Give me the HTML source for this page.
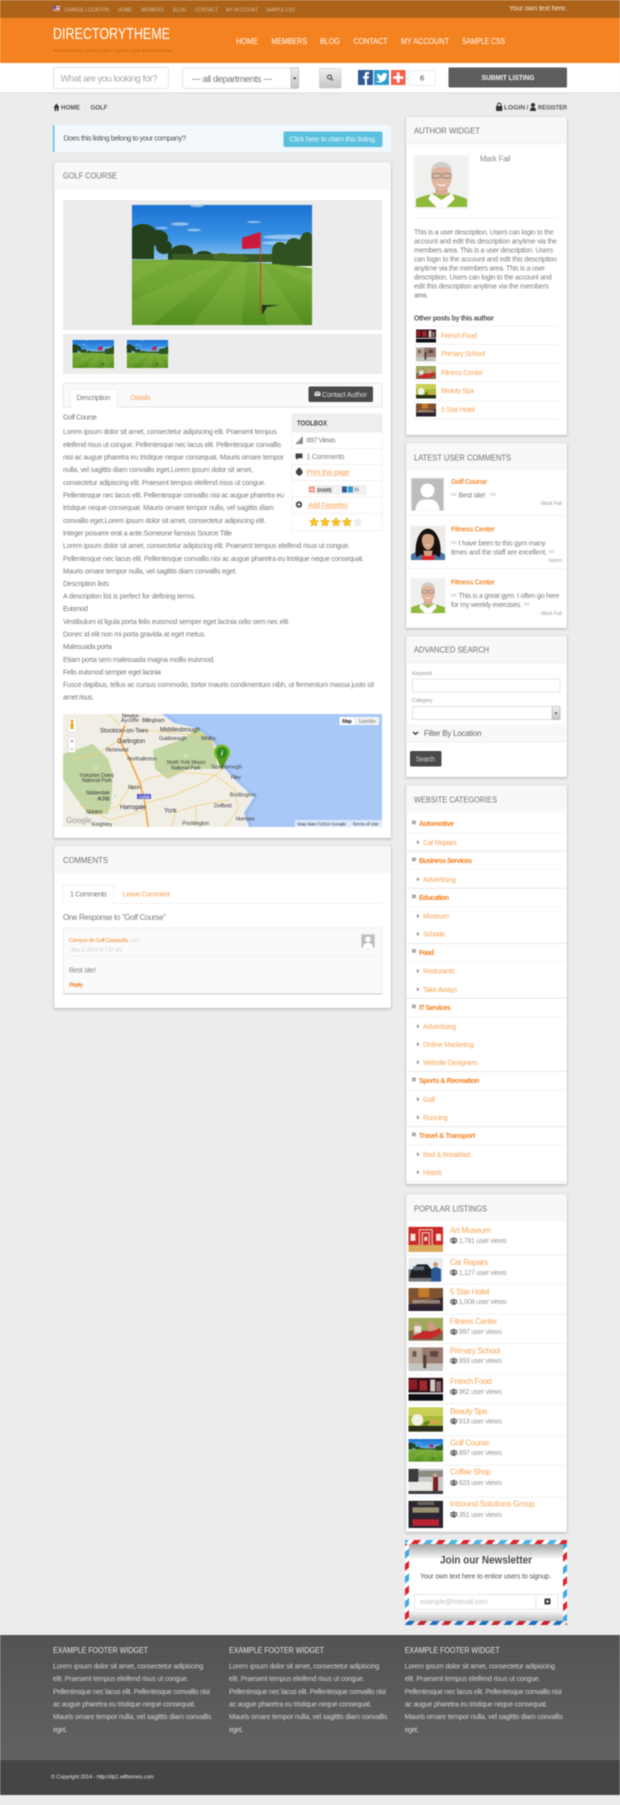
<!DOCTYPE html>
<html lang="en"><head><meta charset="utf-8"><title>Golf Course - Directory Theme</title>
<style>
html,body{margin:0;padding:0;background:#ececec;width:620px;height:1805px;overflow:hidden}
svg{display:block;filter:blur(.42px);font-family:"Liberation Sans",sans-serif}
text{white-space:pre}
.card{fill:#fff;stroke:#ddd;stroke-width:.6;filter:drop-shadow(0 1px 1px rgba(0,0,0,.22))}
.head{fill:#f8f8f8}
.ht{font-size:8.6px;fill:#707070}
.b{font-size:7.1px;fill:#7a7a7a}
.s{font-size:7.1px;fill:#7e7e7e}
.o{font-size:7.1px;fill:#f9a557}
.ob{font-size:7px;fill:#f58220;font-weight:bold}
.v{font-size:7px;fill:#999}
.f{font-size:7.1px;fill:#d2d2d2}
.ft{font-size:8.6px;fill:#e6e6e6}
.top{font-size:5.2px;fill:#dcbf9f}
.nav{font-size:8px;fill:#fff}
.m{font-size:5.5px;fill:#444}
.l{stroke:#eee;stroke-width:.8}
</style></head><body>
<svg xmlns="http://www.w3.org/2000/svg" width="620" height="1805" viewBox="0 0 620 1805">
<defs>
<linearGradient id="sky" x1="0" y1="0" x2="0" y2="1"><stop offset="0" stop-color="#1c72d2"/><stop offset=".55" stop-color="#3a93e6"/><stop offset="1" stop-color="#a4d0f0"/></linearGradient>
<linearGradient id="grass" x1="0" y1="0" x2="0" y2="1"><stop offset="0" stop-color="#79ad3a"/><stop offset=".45" stop-color="#6ea430"/><stop offset="1" stop-color="#518d1e"/></linearGradient>
<linearGradient id="foot" x1="0" y1="0" x2="0" y2="1"><stop offset="0" stop-color="#535353"/><stop offset="1" stop-color="#626262"/></linearGradient>
<linearGradient id="btn" x1="0" y1="0" x2="0" y2="1"><stop offset="0" stop-color="#f0f0f0"/><stop offset="1" stop-color="#c4c4c4"/></linearGradient>
<linearGradient id="nl" x1="0" y1="0" x2="0" y2="1"><stop offset="0" stop-color="#a4a4a4"/><stop offset=".2" stop-color="#fff"/><stop offset=".86" stop-color="#fff"/><stop offset="1" stop-color="#bcbcbc"/></linearGradient>
<pattern id="air" width="24.7" height="4" patternUnits="userSpaceOnUse" patternTransform="skewX(-40)"><rect width="24.7" height="4" fill="#fff"/><rect x="2" width="7" height="4" fill="#e0222f"/><rect x="14.5" width="7" height="4" fill="#4db4e8"/></pattern>
<pattern id="airb" width="24.7" height="4" patternUnits="userSpaceOnUse" patternTransform="skewX(-40)"><rect width="24.7" height="4" fill="#e8e8e8"/><rect x="2" width="7" height="4" fill="#c52430"/><rect x="14.5" width="7" height="4" fill="#1c6dbf"/></pattern>
<pattern id="airv" width="4" height="24.7" patternUnits="userSpaceOnUse" patternTransform="skewY(-40)"><rect width="4" height="24.7" fill="#fff"/><rect y="2" width="4" height="7" fill="#e0222f"/><rect y="14.5" width="4" height="7" fill="#3fa8e4"/></pattern>

<symbol id="golf" viewBox="0 0 180 120" preserveAspectRatio="none">
<rect width="180" height="60" fill="url(#sky)"/>
<g fill="#c4def3" opacity=".65"><ellipse cx="65" cy="1" rx="7" ry="1.2"/><ellipse cx="48" cy="19" rx="9" ry="1.8"/><ellipse cx="62" cy="25" rx="7" ry="1.4"/><ellipse cx="30" cy="23" rx="6" ry="1.1"/><ellipse cx="122" cy="17" rx="7" ry="1"/><ellipse cx="155" cy="32" rx="24" ry="2.5"/><ellipse cx="150" cy="38" rx="20" ry="2"/></g>
<g fill="#24401c"><ellipse cx="11" cy="28" rx="13" ry="9"/><ellipse cx="26" cy="33" rx="10" ry="8"/><ellipse cx="32" cy="42" rx="8" ry="7"/><rect y="28" width="22" height="26"/><ellipse cx="50" cy="47" rx="11" ry="7"/><rect x="36" y="44" width="22" height="11"/><ellipse cx="72" cy="50" rx="8" ry="4"/></g>
<rect x="40" y="49" width="100" height="8" fill="#3a5c24"/>
<g fill="#4a6a26"><ellipse cx="90" cy="52" rx="9" ry="4"/><ellipse cx="105" cy="53" rx="12" ry="3"/></g>
<g fill="#2f5220"><ellipse cx="148" cy="46" rx="8" ry="9"/><ellipse cx="162" cy="44" rx="9" ry="11"/><ellipse cx="175" cy="41" rx="8" ry="14"/><rect x="140" y="48" width="40" height="13"/></g>
<path d="M0 55c40-1 120 0 180 8v57H0z" fill="url(#grass)"/>
<path d="M0 60 42 56 0 78zM0 95 90 57h8L20 120H0zM60 120 107 58h8L110 120zM135 120 123 60h9L172 120zM180 80 140 62h10L180 70z" fill="#9cc552" opacity=".22"/>
<path d="M130 100h18l-13 2-5 8z" fill="#20341a"/>
<rect x="128" y="27" width=".9" height="83" fill="#c43a2c"/>
<path d="M110 33 128 27v16l-18 1z" fill="#cc1a3c"/>
</symbol>

<symbol id="man" viewBox="0 0 50 50" preserveAspectRatio="none">
<rect width="50" height="50" fill="#f0f0ee"/>
<path d="M0 50V42c6-3 13-4 17-6h16c4 2 11 3 17 6v8z" fill="#8fb93a"/>
<path d="M15 36 25 43 35 36l3 6-8 8h-10l-8-8z" fill="#fff"/>
<rect x="19" y="28" width="12" height="10" fill="#d9ab95"/>
<ellipse cx="25" cy="20" rx="10" ry="14" fill="#e2b49e"/>
<path d="M15 17C14 8 20 5 25 5s11 3 10 12c-1-5-4-7-10-7s-9 2-10 7z" fill="#cfcdcb"/>
<rect x="16" y="16.500" width="8" height="4.500" rx="1.500" fill="none" stroke="#8a8f85" stroke-width="1"/><rect x="26" y="16.500" width="8" height="4.500" rx="1.500" fill="none" stroke="#8a8f85" stroke-width="1"/>
<path d="M20 26c3 2.500 7 2.500 10 0-2 4-8 4-10 0z" fill="#fff"/>
</symbol>
<symbol id="woman" viewBox="0 0 50 50" preserveAspectRatio="none">
<rect width="50" height="50" fill="#ecebe8"/>
<path d="M0 50v-8l10-6h30l10 6v8z" fill="#4a74a6"/>
<path d="M16 50V38h18v12z" fill="#d8262c"/>
<path d="M8 46C4 30 10 4 25 3c15 1 22 28 17 43l-6-4-22 0z" fill="#17100e"/>
<path d="M16 20c0-8 5-9 9-9s10 2 9 10c0 8-5 14-9 14s-9-6-9-15z" fill="#d3a084"/><path d="M18 36h14l-2 8h-10z" fill="#d3a084"/>
<path d="M20 26c3 3 7 3 10 0-2 4-8 4-10 0z" fill="#fff"/>
</symbol>
<symbol id="ava" viewBox="0 0 32 32" preserveAspectRatio="none">
<rect width="32" height="32" fill="#bdbdbd"/>
<circle cx="16" cy="12" r="7" fill="#fff"/><path d="M4 32c0-6 3-10 8-11h8c5 1 8 5 8 11z" fill="#fff"/>
</symbol>
<symbol id="users" viewBox="0 0 8 7">
<circle cx="4" cy="1.800" r="1.500"/><circle cx="1.400" cy="2.300" r="1.100"/><circle cx="6.600" cy="2.300" r="1.100"/>
<path d="M1.800 7V5c0-1 .8-1.700 2.200-1.700S6.200 4 6.200 5v2zM0 5.500V4.500c0-.6.500-1 1.500-1l.5.300C1.300 4.300 1.200 4.800 1.200 5.500zM8 5.500V4.500c0-.6-.5-1-1.500-1l-.5.300c.7.500.8 1 .8 1.700z"/>
</symbol>

<symbol id="tMuseum" viewBox="0 0 35 25" preserveAspectRatio="none"><rect width="35" height="25" fill="#c92a27"/><rect y="18" width="35" height="7" fill="#d9a95c"/><rect x="2" y="7" width="5" height="7" fill="#f6e9df"/><rect x="28" y="7" width="5" height="7" fill="#f6e9df"/><path d="M11 18V3h13v15M14 18V6h7v12" fill="none" stroke="#f2dcd3" stroke-width="1"/><rect x="16" y="10" width="3" height="4" fill="#f2dcd3"/></symbol>
<symbol id="tCar" viewBox="0 0 35 25" preserveAspectRatio="none"><rect width="35" height="25" fill="#e9ecef"/><rect y="12" width="24" height="13" fill="#777"/><path d="M1 21 3 13 9 7h10l5 6v8z" fill="#1e2024"/><rect x="5" y="9" width="11" height="4" fill="#5a6a78"/><path d="M23 25V12l3-2h3l4 2v13z" fill="#2a5a96"/><circle cx="27.5" cy="7" r="2.5" fill="#c99b80"/></symbol>
<symbol id="tHotel" viewBox="0 0 35 25" preserveAspectRatio="none"><rect width="35" height="25" fill="#3a2a28"/><path d="M0 0h35v10L0 18z" fill="#7d5334"/><rect x="10" y="0" width="11" height="10" fill="#c47a2a"/><rect x="4" y="13" width="28" height="4" fill="#b9a79a" opacity=".7"/><rect y="19" width="35" height="6" fill="#2a2230"/></symbol>
<symbol id="tFit" viewBox="0 0 35 25" preserveAspectRatio="none"><rect width="35" height="25" fill="#a2a85e"/><rect y="14" width="35" height="11" fill="#7d6a4a"/><path d="M6 6c3-2 5 0 5 3l2 9-8 1z" fill="#cf9c80"/><path d="M20 5c3-2 5 0 5 2l5 6-10 2z" fill="#cf9c80"/><path d="M3 21 15 15l9 0 8-4 1 6-10 6H5z" fill="#c8282a"/><rect x="6" y="9" width="7" height="7" fill="#e6e6df"/></symbol>
<symbol id="tSchool" viewBox="0 0 35 25" preserveAspectRatio="none"><rect width="35" height="25" fill="#9b7a6e"/><rect y="0" width="14" height="17" fill="#b7a79a"/><rect y="17" width="35" height="8" fill="#c6c4c0"/><rect x="22" y="4" width="8" height="6" fill="#5e4a44"/><rect x="4" y="4" width="4" height="6" fill="#6b5a50"/><rect x="15" y="8" width="3" height="14" fill="#4a4038"/></symbol>
<symbol id="tFood" viewBox="0 0 35 25" preserveAspectRatio="none"><rect width="35" height="25" fill="#2a1016"/><rect y="2" width="9" height="11" fill="#8a1c26"/><rect x="11" y="3" width="8" height="11" fill="#a02a30"/><rect x="22" y="2" width="5" height="13" fill="#d4c9c6"/><rect x="28" y="4" width="5" height="11" fill="#8b6a6e"/><rect y="16" width="35" height="2" fill="#e3dfe0"/><rect y="18" width="35" height="7" fill="#0d0d14"/></symbol>
<symbol id="tSpa" viewBox="0 0 35 25" preserveAspectRatio="none"><rect width="35" height="25" fill="#a4bc3a"/><rect y="0" width="35" height="9" fill="#c9cf54"/><ellipse cx="9" cy="13" rx="6" ry="6" fill="#f2f1e6"/><ellipse cx="26" cy="15" rx="7" ry="3" fill="#cfa94a"/><rect y="19" width="35" height="6" fill="#2c3016"/><path d="M14 18c2-4 6-5 8-3l-3 4z" fill="#5f8a22"/></symbol>
<symbol id="tCoffee" viewBox="0 0 35 25" preserveAspectRatio="none"><rect width="35" height="25" fill="#c7c7c4"/><rect x="0" y="0" width="10" height="13" fill="#3a3a3f"/><rect y="13" width="24" height="12" fill="#eceae5"/><rect x="10" y="2" width="25" height="6" fill="#8d8a80"/><rect x="25" y="8" width="5" height="17" fill="#7a1f24"/><circle cx="27" cy="6.5" r="2" fill="#cda78f"/><rect y="22" width="35" height="3" fill="#3a3d42"/></symbol>
<symbol id="tInbound" viewBox="0 0 35 25" preserveAspectRatio="none"><rect width="35" height="25" fill="#2a2530"/><rect x="4" y="6" width="27" height="5" fill="#bdb48c" opacity=".75"/><rect x="9" y="1" width="17" height="3" fill="#8f8a70" opacity=".6"/><rect x="4" y="17" width="27" height="6" fill="#b82435"/></symbol>
</defs>

<!-- page -->
<rect width="620" height="1805" fill="#ececec"/>

<!-- top bar -->
<rect width="620" height="18" fill="#ad6319"/>
<rect x="53" y="6" width="7" height="5" fill="#e6d9d9"/><rect x="53" y="6" width="3" height="3" fill="#4a60a8"/><rect x="56" y="7" width="4" height="1" fill="#d05a5a"/><rect x="53" y="9.5" width="7" height="1" fill="#d05a5a"/>
<text class="top" x="64" y="11.5" textLength="45" lengthAdjust="spacingAndGlyphs">CHANGE LOCATION</text>
<text class="top" x="118" y="11.5" textLength="14" lengthAdjust="spacingAndGlyphs">HOME</text>
<text class="top" x="141" y="11.5" textLength="23" lengthAdjust="spacingAndGlyphs">MEMBERS</text>
<text class="top" x="173" y="11.5" textLength="13" lengthAdjust="spacingAndGlyphs">BLOG</text>
<text class="top" x="195" y="11.5" textLength="23" lengthAdjust="spacingAndGlyphs">CONTACT</text>
<text class="top" x="226" y="11.5" textLength="32" lengthAdjust="spacingAndGlyphs">MY ACCOUNT</text>
<text class="top" x="266" y="11.5" textLength="29" lengthAdjust="spacingAndGlyphs">SAMPLE CSS</text>
<text x="509" y="10.5" textLength="58" font-size="7" fill="#f3e4d3">Your own text here.</text>

<!-- header -->
<rect y="18" width="620" height="45" fill="#f58220"/>
<text x="53" y="39" textLength="117" lengthAdjust="spacingAndGlyphs" font-size="15.5" fill="#fff">DIRECTORYTHEME</text>
<text x="54" y="52" textLength="117" font-size="3.8" fill="#a85a12">RESPONSIVE DIRECTORY THEME FOR WORDPRESS</text>
<text class="nav" x="236" y="44" textLength="22" lengthAdjust="spacingAndGlyphs">HOME</text>
<text class="nav" x="271.5" y="44" textLength="35.5" lengthAdjust="spacingAndGlyphs">MEMBERS</text>
<text class="nav" x="320" y="44" textLength="20" lengthAdjust="spacingAndGlyphs">BLOG</text>
<text class="nav" x="353.5" y="44" textLength="34" lengthAdjust="spacingAndGlyphs">CONTACT</text>
<text class="nav" x="401" y="44" textLength="48" lengthAdjust="spacingAndGlyphs">MY ACCOUNT</text>
<text class="nav" x="462" y="44" textLength="43" lengthAdjust="spacingAndGlyphs">SAMPLE CSS</text>

<!-- search bar -->
<rect y="63" width="620" height="30" fill="#fff"/><rect y="92.5" width="620" height="1" fill="#d8d8d8"/>
<rect x="53.5" y="67.5" width="115" height="21" rx="2" fill="#fff" stroke="#e4e4e4"/>
<text x="60.5" y="81.5" textLength="97" font-size="9.5" fill="#aaa">What are you looking for?</text>
<rect x="182.5" y="68" width="116" height="20.5" rx="2" fill="#fff" stroke="#e2e2e2"/>
<text x="192" y="82" textLength="80" font-size="9.5" fill="#777">--- all departments ---</text>
<rect x="291" y="68" width="7.5" height="20" fill="url(#btn)" stroke="#aaa" stroke-width=".5"/><path d="M293 77.500h3.500l-1.750 2z" fill="#333"/>
<rect x="319.500" y="68.500" width="21.500" height="19.500" fill="url(#btn)" stroke="#ccc" stroke-width=".6"/>
<circle cx="329.500" cy="77" r="2" fill="none" stroke="#444" stroke-width="1"/><path d="M331 78.500l2 2" stroke="#444" stroke-width="1.200"/>
<rect x="358" y="70" width="15" height="15" fill="#2f5a94"/><path d="M364.800 85V78.500h-1.800v-2.300h1.800v-1.700c0-1.800 1-2.600 2.700-2.600h1.600v2.200h-1.100c-.8 0-1 .4-1 1v1.100h2.100l-.3 2.300h-1.800V85z" fill="#fff"/>
<rect x="374" y="70" width="15" height="15" fill="#2f9fd0"/><path d="M376 81.500c5 2.600 10.500-.4 10.500-6.200l1-1.300-1.300.4.900-1.300-1.300.6c-1.500-1.500-4-.3-3.600 1.900-2 0-3.500-1-4.800-2.300-.6 1.300-.2 2.500.8 3.200l-1-.2c0 1.200.8 2 2 2.400h-1c.4 1 1.200 1.500 2.200 1.600-1 .7-2.300 1-3.400 1z" fill="#fff"/>
<rect x="391" y="70" width="14.500" height="15" fill="#f4624a"/><path d="M396.900 72.500h2.700v3.700h3.700v2.700h-3.700v3.700h-2.700v-3.700h-3.700v-2.700h3.700z" fill="#fff"/>
<path d="M409.500 70.500h25a1 1 0 0 1 1 1v13a1 1 0 0 1-1 1h-25v-5.500l-3-2 3-2z" fill="#fff" stroke="#e8e8e8" stroke-width=".8"/>
<text x="420" y="80.500" font-size="7.500" fill="#333">6</text>
<rect x="448.500" y="67.500" width="118.500" height="20" rx="1" fill="#5d5d5d"/>
<text x="481.500" y="80" textLength="53" lengthAdjust="spacingAndGlyphs" font-size="7.500" fill="#f4f4f4" font-weight="bold">SUBMIT LISTING</text>

<!-- breadcrumb -->
<path d="M53.500 107.500 56.500 103.500 59.500 107.500h-1v3.500h-1.500v-2.500h-1v2.500h-1.500v-3.500z" fill="#333"/>
<text x="61" y="109.500" textLength="19" lengthAdjust="spacingAndGlyphs" font-size="6.800" font-weight="bold" fill="#555">HOME</text>
<text x="85" y="109.500" font-size="6" fill="#ccc">/</text>
<text x="90.500" y="109.500" textLength="17" lengthAdjust="spacingAndGlyphs" font-size="6.800" font-weight="bold" fill="#555">GOLF</text>
<path d="M497 106v-1.200a2.200 2.200 0 0 1 4.400 0V106h.9v5h-6.200v-5zm1 0h2.400v-1.200a1.200 1.200 0 0 0-2.400 0z" fill="#333"/>
<text x="504" y="109.500" textLength="21" lengthAdjust="spacingAndGlyphs" font-size="6.800" font-weight="bold" fill="#555">LOGIN</text>
<text x="526.500" y="109.500" font-size="6.800" font-weight="bold" fill="#555">/</text>
<circle cx="533" cy="105" r="2" fill="#333"/><path d="M530 111c0-2.500 1.200-3.700 3-3.700s3 1.200 3 3.700z" fill="#333"/>
<text x="538" y="109.500" textLength="29" lengthAdjust="spacingAndGlyphs" font-size="6.800" font-weight="bold" fill="#555">REGISTER</text>

<!-- claim alert -->
<rect x="53" y="125" width="338" height="27" fill="#f2f8fb"/><rect x="53" y="125" width="1.500" height="27" fill="#5bc0de"/>
<text x="63.500" y="140.500" textLength="122.500" font-size="7.500" fill="#555">Does this listing belong to your company?</text>
<rect x="283.500" y="131.500" width="99" height="15.500" rx="1.500" fill="#5bc0de"/>
<text x="289.500" y="141.500" textLength="87" font-size="7.200" fill="#e4f5fb">Click here to claim this listing.</text>

<!-- main card -->
<rect class="card" x="54" y="162" width="337" height="676"/>
<rect class="head" x="54.300" y="162.300" width="336.400" height="26"/><line class="l" x1="54" y1="188.500" x2="391" y2="188.500"/>
<text class="ht" x="63" y="178.500" textLength="54" lengthAdjust="spacingAndGlyphs">GOLF COURSE</text>
<rect x="63" y="200" width="319" height="130" fill="#ececec"/>
<rect x="132" y="205" width="180" height="120" fill="#fff" stroke="#ddd" stroke-width="1"/>
<use href="#golf" x="132" y="205" width="180" height="120"/>
<rect x="63" y="334" width="319" height="40" fill="#ececec"/>
<rect x="71.500" y="339.500" width="43" height="29" fill="#f5f5f5"/><use href="#golf" x="72.500" y="340" width="41.500" height="28"/>
<rect x="125.500" y="339.500" width="43" height="29" fill="#f5f5f5"/><use href="#golf" x="126.700" y="340" width="41.500" height="28"/>

<!-- tabs -->
<rect x="63.300" y="383.300" width="318.700" height="23.700" fill="#fafafa" stroke="#ddd" stroke-width=".7"/>
<rect x="70.500" y="389" width="47" height="18.500" fill="#fff" stroke="#eee" stroke-width=".7"/><rect x="71" y="404" width="46" height="4" fill="#fff"/>
<text x="76.500" y="400" textLength="34" font-size="7.500" fill="#7e7e7e">Description</text>
<text class="o" x="130.500" y="400" textLength="20">Details</text>
<rect x="308.500" y="386.500" width="64.500" height="15.500" rx="1.500" fill="#4a4a4a"/>
<path d="M314.500 391.500h6v4.500h-6z" fill="#e6e6e6"/><path d="M314.500 391.500l3 2.500 3-2.500" fill="none" stroke="#4a4a4a" stroke-width=".6"/>
<text x="322" y="397" textLength="45" font-size="7.200" fill="#dcdcdc">Contact Author</text>

<!-- description -->
<text class="b" x="63" y="419.500" textLength="34">Golf Course</text>
<text class="b" x="63" y="434.200" textLength="214">Lorem ipsum dolor sit amet, consectetur adipiscing elit. Praesent tempus</text>
<text class="b" x="63" y="446.800" textLength="218">eleifend risus ut congue. Pellentesque nec lacus elit. Pellentesque convallis</text>
<text class="b" x="63" y="459.500" textLength="221">nisi ac augue pharetra eu tristique neque consequat. Mauris ornare tempor</text>
<text class="b" x="63" y="472.200" textLength="190">nulla, vel sagittis diam convallis eget.Lorem ipsum dolor sit amet,</text>
<text class="b" x="63" y="484.800" textLength="203">consectetur adipiscing elit. Praesent tempus eleifend risus ut congue.</text>
<text class="b" x="63" y="497.500" textLength="221">Pellentesque nec lacus elit. Pellentesque convallis nisi ac augue pharetra eu</text>
<text class="b" x="63" y="510.200" textLength="211">tristique neque consequat. Mauris ornare tempor nulla, vel sagittis diam</text>
<text class="b" x="63" y="522.800" textLength="203">convallis eget.Lorem ipsum dolor sit amet, consectetur adipiscing elit.</text>
<text class="b" x="63" y="535.500" textLength="169">Integer posuere erat a ante.Someone famous Source Title</text>
<text class="b" x="63" y="548.200" textLength="287">Lorem ipsum dolor sit amet, consectetur adipiscing elit. Praesent tempus eleifend risus ut congue.</text>
<text class="b" x="63" y="560.800" textLength="301">Pellentesque nec lacus elit. Pellentesque convallis nisi ac augue pharetra eu tristique neque consequat.</text>
<text class="b" x="63" y="573.500" textLength="174">Mauris ornare tempor nulla, vel sagittis diam convallis eget.</text>
<text class="b" x="63" y="585.800" textLength="46">Description lists</text>
<text class="b" x="63" y="598.500" textLength="133">A description list is perfect for defining terms.</text>
<text class="b" x="63" y="611.200" textLength="25">Euismod</text>
<text class="b" x="63" y="623.800" textLength="227">Vestibulum id ligula porta felis euismod semper eget lacinia odio sem nec elit.</text>
<text class="b" x="63" y="636.500" textLength="143">Donec id elit non mi porta gravida at eget metus.</text>
<text class="b" x="63" y="649.200" textLength="49">Malesuada porta</text>
<text class="b" x="63" y="661.800" textLength="152">Etiam porta sem malesuada magna mollis euismod.</text>
<text class="b" x="63" y="674.500" textLength="98">Felis euismod semper eget lacinia</text>
<text class="b" x="63" y="687.200" textLength="311">Fusce dapibus, tellus ac cursus commodo, tortor mauris condimentum nibh, ut fermentum massa justo sit</text>
<text class="b" x="63" y="699.500" textLength="31">amet risus.</text>

<!-- toolbox -->
<rect x="292" y="414" width="90" height="117" fill="#fff" stroke="#eee" stroke-width=".7"/>
<rect x="292" y="414" width="90" height="18.500" fill="#eee"/>
<text x="297" y="425.500" textLength="30" lengthAdjust="spacingAndGlyphs" font-size="7" font-weight="bold" fill="#444">TOOLBOX</text>
<line class="l" x1="292" y1="448.500" x2="382" y2="448.500"/><line class="l" x1="292" y1="464.500" x2="382" y2="464.500"/><line class="l" x1="292" y1="480.500" x2="382" y2="480.500"/><line class="l" x1="292" y1="497" x2="382" y2="497"/><line class="l" x1="292" y1="513.500" x2="382" y2="513.500"/>
<path d="M296 442.500h1.200v1.500H296zM297.800 441h1.200v3h-1.200zM299.600 439h1.200v5h-1.200zM301.400 437h1.200v7h-1.200z" fill="#555"/>
<text class="s" x="306.500" y="442.700" textLength="29">897 Views</text>
<path d="M295.500 453.500h7v4.800h-4.200l-2 1.700v-1.700h-.8z" fill="#444"/>
<text class="s" x="306.500" y="458.800" textLength="38">1 Comments</text>
<path d="M297.500 468h3.500v2h1.500v4h-1.500v1.500h-3.500V474H296v-4h1.500z" fill="#444"/>
<text class="o" x="306.500" y="474.500" textLength="43">Print this page</text><line x1="306.500" y1="475.500" x2="349.500" y2="475.500" stroke="#f9a557" stroke-width=".5"/>
<rect x="308.500" y="486" width="57" height="7.500" fill="#f4f4f4" stroke="#ccc" stroke-width=".5"/>
<rect x="309.500" y="487" width="5" height="5" fill="#f4624a"/><rect x="311.500" y="487.500" width="1" height="4" fill="#fff"/><rect x="310" y="489" width="4" height="1" fill="#fff"/>
<text x="317" y="492" textLength="15" lengthAdjust="spacingAndGlyphs" font-size="5" fill="#444" font-weight="bold">SHARE</text>
<rect x="342" y="486.500" width="5" height="6" fill="#2f5a94"/><rect x="348" y="486.500" width="5" height="6" fill="#2f9fd0"/><rect x="354" y="487.500" width="5" height="4" fill="#bbb"/>
<circle cx="299" cy="504.500" r="3.200" fill="#444"/><path d="M298.500 502.700h1v1.300h1.300v1h-1.300v1.300h-1v-1.300h-1.300v-1h1.300z" fill="#fff"/>
<text class="o" x="308" y="507.500" textLength="40">Add Favorites</text><line x1="308" y1="508.500" x2="348" y2="508.500" stroke="#f9a557" stroke-width=".5"/>
<g fill="#f8c322" stroke="#e0a20f" stroke-width=".5" stroke-linejoin="round">
<path d="M314 517.500l1.400 2.900 3.200.4-2.300 2.200.6 3.200-2.900-1.500-2.900 1.500.6-3.200-2.300-2.200 3.200-.4z"/>
<path d="M325 517.500l1.400 2.900 3.200.4-2.300 2.200.6 3.200-2.900-1.500-2.900 1.500.6-3.200-2.300-2.200 3.200-.4z"/>
<path d="M336 517.500l1.400 2.900 3.200.4-2.300 2.200.6 3.200-2.900-1.500-2.900 1.500.6-3.200-2.300-2.200 3.200-.4z"/>
<path d="M347 517.500l1.400 2.900 3.200.4-2.300 2.200.6 3.200-2.900-1.500-2.900 1.500.6-3.200-2.300-2.200 3.200-.4z"/>
</g>
<path d="M358 517.500l1.400 2.900 3.200.4-2.300 2.200.6 3.200-2.900-1.500-2.900 1.500.6-3.200-2.300-2.200 3.200-.4z" fill="#eee" stroke="#ddd" stroke-width=".4"/>

<!-- map -->
<g>
<rect x="63" y="714" width="319" height="113" fill="#a8c9f8"/>
<path d="M157 714H168L180 723 202 728 218 742 228 768 241 782 258 797 248 813 253 827H240L234 800 220 775 210 745 190 730z" fill="#8fb6ee" opacity=".45"/>
<path d="M63 714H162L174 723 197 728 214 742 224 768 237 782 254 797 244 813 249 827H63z" fill="#f1eee6"/>
<path d="M153 750 183 739 197 728 213 742 218 769 188 769 168 779 155 769z" fill="#c2d6a3"/>
<path d="M63 754 93 744 108 759 113 774 111 804 108 814 88 814 73 794 63 779z" fill="#c2d6a3"/>
<path d="M125 725 120 741 130 760 140 783 145 803 148 827" fill="none" stroke="#f4a742" stroke-width="1.600"/>
<g fill="none" stroke="#f4d27a" stroke-width=".8">
<path d="M145 730 170 733 205 735M118 741 100 752 72 760M148 778 180 772 215 775 235 790M145 803 175 795 205 782 222 770M145 810 110 820 80 805M175 812 200 805 230 800M175 812 172 827M120 725 108 714M148 778 128 790 118 806 95 815M204 735 216 745M235 790 238 810 225 827M195 805 198 827"/>
</g>
<circle cx="222" cy="752.500" r="8" fill="#7ab82a"/><path d="M216 757 222 770 228 757z" fill="#5c9a1e"/><circle cx="222" cy="752.500" r="5.500" fill="#2f8a1c"/>
<text x="221" y="755.500" font-size="7" font-style="italic" font-weight="bold" fill="#fff">i</text>
<g font-size="5.800" fill="#444">
<text class="m" x="122" y="717.500" textLength="17">Newton</text>
<text class="m" x="121" y="722" textLength="18">Aycliffe</text>
<text class="m" x="142" y="722" textLength="23">Billingham</text>
<text x="100" y="732.500" textLength="48.300" font-size="6.300" fill="#333">Stockton-on-Tees</text>
<text x="160" y="731.500" textLength="40" font-size="6.300" fill="#333">Middlesbrough</text>
<text x="117.300" y="743" textLength="27.700" font-size="6.300" fill="#333">Darlington</text>
<text class="m" x="201" y="740" textLength="15">Whitby</text>
<text class="m" x="159" y="740" textLength="27.700">Guisborough</text>
<text class="m" x="105.700" y="751.700" textLength="22.600">Richmond</text>
<text class="m" x="127.300" y="760.700" textLength="29.400">Northallerton</text>
<text class="m" x="166.700" y="764" textLength="39">North York Moors</text>
<text class="m" x="171" y="769.300" textLength="29.700">National Park</text>
<text class="m" x="79.300" y="777" textLength="34.700">Yorkshire Dales</text>
<text class="m" x="81.700" y="782" textLength="30">National Park</text>
<text class="m" x="211.300" y="768.700" textLength="30.700">Scarborough</text>
<text class="m" x="230.700" y="779" textLength="10.300">Filey</text>
<text class="m" x="128" y="789" textLength="12.700">Ripon</text>
<text class="m" x="86" y="794.700" textLength="24">Nidderdale</text>
<text class="m" x="97.300" y="800.300" textLength="12.700">AONB</text>
<text class="m" x="229.700" y="796.300" textLength="26.300">Bridlington</text>
<text x="120" y="809" textLength="26" font-size="6.300" fill="#333">Harrogate</text>
<text class="m" x="214" y="807.300" textLength="17.700">Driffield</text>
<text x="164" y="812.500" textLength="12.700" font-size="6.300" fill="#333">York</text>
<text class="m" x="86" y="813.700" textLength="16.700">Skipton</text>
<text class="m" x="235.700" y="820.700" textLength="19">Hornsea</text>
<text class="m" x="91.700" y="826" textLength="20.600">Keighley</text>
<text class="m" x="182.300" y="825" textLength="26.700">Pocklington</text>
<text x="66" y="823" textLength="25.700" font-size="8" fill="#999" opacity=".7" font-weight="bold">Google</text>
</g>
<rect x="137" y="794" width="14" height="5" fill="#5a5ac8"/><text x="138.500" y="798.300" textLength="11" font-size="4.500" fill="#fff">A1(M)</text>
<circle cx="186" cy="755.500" r="1.500" fill="#fff"/><circle cx="186" cy="755.500" r=".8" fill="#7ab82a"/><circle cx="96" cy="768.500" r="1.500" fill="#fff"/><circle cx="96" cy="768.500" r=".8" fill="#7ab82a"/><circle cx="115" cy="795.500" r="1.500" fill="#fff"/><circle cx="115" cy="795.500" r=".8" fill="#7ab82a"/>
<rect x="68.500" y="718" width="8" height="14.500" rx="1" fill="#fff" stroke="#ccc" stroke-width=".4"/><circle cx="72" cy="721" r="1.500" fill="#e8a520"/><path d="M70.500 723h3v6h-3z" fill="#e8a520"/>
<rect x="68.500" y="737.500" width="7" height="15" fill="#fff" stroke="#ccc" stroke-width=".4"/><path d="M70.500 741h3M72 739.500v3M70.500 749h3" stroke="#666" stroke-width=".6"/>
<rect x="339.500" y="717" width="15.500" height="8" fill="#fff"/><text x="342" y="723" textLength="10" font-size="5.500" font-weight="bold" fill="#333">Map</text>
<rect x="355.500" y="717" width="23.500" height="8" fill="#f4f4f4"/><text x="358" y="723" textLength="18" font-size="5.500" fill="#888">Satellite</text>
<rect x="295" y="820" width="87" height="7" fill="#fff" opacity=".6"/>
<text x="297.300" y="825.500" textLength="48.700" font-size="4.800" fill="#444">Map data ©2014 Google</text>
<text x="352.300" y="825.500" textLength="26.400" font-size="4.800" fill="#444">Terms of Use</text>
</g>

<!-- comments card -->
<rect class="card" x="54" y="846" width="337" height="162"/>
<rect class="head" x="54.300" y="846.300" width="336.400" height="27"/>
<text class="ht" x="63" y="863" textLength="45" lengthAdjust="spacingAndGlyphs">COMMENTS</text>
<rect x="63" y="885" width="51" height="18.500" fill="#fff" stroke="#eee" stroke-width=".7"/>
<line class="l" x1="63" y1="903.500" x2="382" y2="903.500"/>
<rect x="63.500" y="901" width="50" height="3" fill="#fff"/>
<text x="70" y="896.500" textLength="37" font-size="7.300" fill="#7e7e7e">1 Comments</text>
<text class="o" x="122.500" y="896.500" textLength="47.500">Leave Comment</text>
<text x="63" y="919.800" textLength="103" font-size="8" fill="#7d7d7d">One Response to "Golf Course"</text>
<rect x="63.300" y="928" width="318.700" height="66" fill="#fafafa" stroke="#e8e8e8" stroke-width=".7"/>
<rect x="63.300" y="993.500" width="318.700" height="1" fill="#ccc"/>
<text x="69" y="942" textLength="59" font-size="5.700" fill="#f58f3a">Campos de Golf Casasuña</text>
<text x="130" y="942" textLength="10" font-size="5.500" fill="#ddd">says:</text>
<text x="71" y="951.700" textLength="51" font-size="5" fill="#ccc">May 9, 2014 at 7:37 am</text>
<line class="l" x1="69" y1="956" x2="376" y2="956"/>
<rect x="360.500" y="933.500" width="15" height="15" fill="#f2f2f2"/><use href="#ava" x="361.500" y="934.500" width="13" height="13"/>
<text x="69" y="972.700" textLength="27" font-size="7.500" fill="#8c8c8c">Best site!</text>
<text x="69.300" y="986.300" textLength="13.700" font-size="5.800" font-weight="bold" fill="#f5822a">Reply</text>

<!-- author widget -->
<rect class="card" x="406" y="117" width="161" height="318"/>
<rect class="head" x="406.300" y="117.300" width="160.400" height="26.500"/><line class="l" x1="406" y1="143.700" x2="567" y2="143.700"/>
<text class="ht" x="414" y="133.500" textLength="66" lengthAdjust="spacingAndGlyphs">AUTHOR WIDGET</text>
<rect x="414" y="155" width="55" height="54" fill="#f4f4f4"/><use href="#man" x="416" y="157" width="51" height="50"/>
<text x="480" y="161.500" textLength="30.500" font-size="7.800" fill="#8a8a8a">Mark Fail</text>
<line class="l" x1="414" y1="218" x2="558" y2="218"/>
<text class="s" x="414" y="234.500" textLength="139.700">This is a user description. Users can login to the</text>
<text class="s" x="414" y="243.500" textLength="143">account and edit this description anytime via the</text>
<text class="s" x="414" y="252.500" textLength="139">members area. This is a user description. Users</text>
<text class="s" x="414" y="261.500" textLength="143">can login to the account and edit this description</text>
<text class="s" x="414" y="270.500" textLength="131">anytime via the members area. This is a user</text>
<text class="s" x="414" y="279.500" textLength="137.700">description. Users can login to the account and</text>
<text class="s" x="414" y="288.500" textLength="134.700">edit this description anytime via the members</text>
<text class="s" x="414" y="297.500" textLength="14">area.</text>
<text x="414" y="320.500" textLength="80" font-size="7" font-weight="bold" fill="#555">Other posts by this author</text>
<line class="l" x1="414" y1="326" x2="558" y2="326"/><line class="l" x1="414" y1="344.500" x2="558" y2="344.500"/><line class="l" x1="414" y1="363.300" x2="558" y2="363.300"/><line class="l" x1="414" y1="381.500" x2="558" y2="381.500"/><line class="l" x1="414" y1="401" x2="558" y2="401"/><line class="l" x1="414" y1="419" x2="558" y2="419"/>
<use href="#tFood" x="416" y="329.500" width="20" height="13"/>
<use href="#tSchool" x="416" y="347.500" width="20" height="14"/>
<use href="#tFit" x="416" y="366" width="20" height="13"/>
<use href="#tSpa" x="416" y="384" width="20" height="14.500"/>
<use href="#tHotel" x="416" y="403.500" width="20" height="13"/>
<text class="o" x="441" y="338.200" textLength="36">French Food</text>
<text class="o" x="441" y="356.200" textLength="44">Primary School</text>
<text class="o" x="441" y="374.800" textLength="42">Fitness Center</text>
<text class="o" x="441" y="393.200" textLength="33">Beauty Spa</text>
<text class="o" x="441" y="412.200" textLength="34">5 Star Hotel</text>

<!-- latest comments -->
<rect class="card" x="406" y="443" width="161" height="185"/>
<rect class="head" x="406.300" y="443.300" width="160.400" height="27.200"/>
<text class="ht" x="414" y="460.500" textLength="97" lengthAdjust="spacingAndGlyphs">LATEST USER COMMENTS</text>
<line class="l" x1="406" y1="515.500" x2="567" y2="515.500"/><line class="l" x1="406" y1="568.500" x2="567" y2="568.500"/>
<rect x="410.500" y="477" width="34" height="34" fill="#f4f4f4"/><use href="#ava" x="411.500" y="478.500" width="32" height="32"/>
<rect x="410" y="525.500" width="36" height="35" fill="#f4f4f4"/><use href="#woman" x="411" y="526.500" width="34" height="33.500"/>
<rect x="410" y="578" width="36" height="36" fill="#f4f4f4"/><use href="#man" x="411" y="579" width="34" height="34"/>
<text x="451" y="484" textLength="36" font-size="7" font-weight="bold" fill="#f58f3a">Golf Course</text>
<text x="451" y="531.500" textLength="44" font-size="7" font-weight="bold" fill="#f58f3a">Fitness Center</text>
<text x="451" y="584.500" textLength="44" font-size="7" font-weight="bold" fill="#f58f3a">Fitness Center</text>
<g fill="#dcdcdc"><path d="M451 493h2.400v3h-2.400zM454 493h2.400v3H454zM490 493h2.400v3H490zM493 493h2.400v3H493zM451 541h2.400v3h-2.400zM454 541h2.400v3H454zM549 550h2.400v3H549zM552 550h2.400v3H552zM451 593.500h2.400v3h-2.400zM454 593.500h2.400v3H454zM524 602.500h2.400v3H524zM527 602.500h2.400v3H527z"/></g>
<text class="s" x="458.500" y="497.500" textLength="27">Best site!</text>
<text class="s" x="458.500" y="545.500" textLength="87">I have been to this gym many</text>
<text class="s" x="451" y="554.500" textLength="96">times and the staff are excellent.</text>
<text class="s" x="458.500" y="598" textLength="101">This is a great gym. I often go here</text>
<text class="s" x="451" y="607" textLength="71">for my weekly exercises.</text>
<text x="538.500" y="505.200" textLength="23.500" font-size="5" fill="#999">- Mark Fail</text>
<text x="546" y="562.200" textLength="16" font-size="5" fill="#999">- karen</text>
<text x="538.500" y="615" textLength="23.500" font-size="5" fill="#999">- Mark Fail</text>

<!-- advanced search -->
<rect class="card" x="406" y="636" width="161" height="141"/>
<rect class="head" x="406.300" y="636.300" width="160.400" height="26"/><line class="l" x1="406" y1="662.500" x2="567" y2="662.500"/>
<text class="ht" x="414" y="652.500" textLength="75" lengthAdjust="spacingAndGlyphs">ADVANCED SEARCH</text>
<text x="412" y="675" textLength="20" font-size="5.500" fill="#999">Keyword</text>
<rect x="412.500" y="679" width="147.500" height="13" fill="#fff" stroke="#e2e2e2" stroke-width=".8"/>
<text x="412" y="702" textLength="20.500" font-size="5.500" fill="#999">Category</text>
<rect x="412.500" y="706.500" width="147.500" height="13" fill="#fff" stroke="#d8d8d8" stroke-width=".8"/>
<rect x="552" y="706.500" width="8" height="13" fill="url(#btn)" stroke="#aaa" stroke-width=".5"/><path d="M554.500 712.500h3l-1.500 1.800z" fill="#333"/>
<rect x="406.300" y="724" width="160.400" height="18" fill="#f8f8f8"/><line class="l" x1="406" y1="742" x2="567" y2="742"/>
<path d="M413 732l2.500 2.200 2.500-2.200" fill="none" stroke="#333" stroke-width="1.300"/>
<text x="424" y="735.800" textLength="57.500" font-size="7.800" fill="#666">Filter By Location</text>
<rect x="410" y="751" width="31.500" height="15.500" rx="1.500" fill="#4a4a4a"/>
<text x="415.500" y="761.500" textLength="19.500" font-size="7" fill="#c8c8c8">Search</text>

<!-- categories -->
<rect class="card" x="406" y="785" width="161" height="399"/>
<rect class="head" x="406.300" y="785.300" width="160.400" height="27.200"/>
<text class="ht" x="414" y="802.500" textLength="83" lengthAdjust="spacingAndGlyphs">WEBSITE CATEGORIES</text>
<g stroke="#f4f4f4" stroke-width=".9">
<line x1="406" y1="832.700" x2="567" y2="832.700"/><line x1="406" y1="869.300" x2="567" y2="869.300"/><line x1="406" y1="906.700" x2="567" y2="906.700"/><line x1="406" y1="961.700" x2="567" y2="961.700"/><line x1="406" y1="1016.700" x2="567" y2="1016.700"/><line x1="406" y1="1090" x2="567" y2="1090"/><line x1="406" y1="1145" x2="567" y2="1145"/>
</g>
<g stroke="#e4e4e4" stroke-width=".8">
<line x1="406" y1="851.300" x2="567" y2="851.300"/><line x1="406" y1="888.300" x2="567" y2="888.300"/><line x1="406" y1="943.500" x2="567" y2="943.500"/><line x1="406" y1="998.300" x2="567" y2="998.300"/><line x1="406" y1="1071.500" x2="567" y2="1071.500"/><line x1="406" y1="1126.500" x2="567" y2="1126.500"/><line x1="406" y1="1181.500" x2="567" y2="1181.500"/>
</g>
<g fill="#a8a8a0"><rect x="412" y="820.500" width="3.800" height="3.800"/><rect x="412" y="857.500" width="3.800" height="3.800"/><rect x="412" y="894.500" width="3.800" height="3.800"/><rect x="412" y="949" width="3.800" height="3.800"/><rect x="412" y="1004.500" width="3.800" height="3.800"/><rect x="412" y="1077.500" width="3.800" height="3.800"/><rect x="412" y="1132.500" width="3.800" height="3.800"/></g>
<text class="ob" x="419" y="826.200" textLength="35">Automotive</text>
<text class="ob" x="419" y="863.200" textLength="53">Business Services</text>
<text class="ob" x="419" y="900.200" textLength="30">Education</text>
<text class="ob" x="419" y="954.800" textLength="15">Food</text>
<text class="ob" x="419" y="1010.200" textLength="31.700">IT Services</text>
<text class="ob" x="419" y="1083.200" textLength="60.300">Sports &amp; Recreation</text>
<text class="ob" x="419" y="1138.200" textLength="56.300">Travel &amp; Transport</text>
<g fill="#888"><path d="M417 840.300l2.500 2-2.500 2zM417 877.300l2.500 2-2.500 2zM417 914l2.500 2-2.500 2zM417 932l2.500 2-2.500 2zM417 969l2.500 2-2.500 2zM417 987.300l2.500 2-2.500 2zM417 1024.300l2.500 2-2.500 2zM417 1042.300l2.500 2-2.500 2zM417 1060.300l2.500 2-2.500 2zM417 1097.300l2.500 2-2.500 2zM417 1115.300l2.500 2-2.500 2zM417 1152.300l2.500 2-2.500 2zM417 1170.300l2.500 2-2.500 2z"/></g>
<text class="o" x="423" y="844.800" textLength="33.700">Car Repairs</text>
<text class="o" x="423" y="881.800" textLength="33">Advertising</text>
<text class="o" x="423" y="918.500" textLength="26">Museum</text>
<text class="o" x="423" y="936.500" textLength="22.300">Schools</text>
<text class="o" x="423" y="973.500" textLength="31.700">Resturants</text>
<text class="o" x="423" y="991.800" textLength="34">Take Aways</text>
<text class="o" x="423" y="1028.800" textLength="33">Advertising</text>
<text class="o" x="423" y="1046.800" textLength="51">Online Marketing</text>
<text class="o" x="423" y="1064.800" textLength="54.300">Website Designers</text>
<text class="o" x="423" y="1101.800" textLength="12">Golf</text>
<text class="o" x="423" y="1119.800" textLength="24.700">Running</text>
<text class="o" x="423" y="1156.800" textLength="47.700">Bed &amp; Breakfast</text>
<text class="o" x="423" y="1174.800" textLength="19">Hotels</text>

<!-- popular listings -->
<rect class="card" x="406" y="1194" width="161" height="338"/>
<rect class="head" x="406.300" y="1194.300" width="160.400" height="27"/>
<text class="ht" x="414" y="1211.500" textLength="73" lengthAdjust="spacingAndGlyphs">POPULAR LISTINGS</text>
<g stroke="#f0f0f0" stroke-width=".9">
<line x1="406" y1="1255" x2="567" y2="1255"/><line x1="406" y1="1284.300" x2="567" y2="1284.300"/><line x1="406" y1="1314.300" x2="567" y2="1314.300"/><line x1="406" y1="1343.700" x2="567" y2="1343.700"/><line x1="406" y1="1374.300" x2="567" y2="1374.300"/><line x1="406" y1="1403.700" x2="567" y2="1403.700"/><line x1="406" y1="1435.700" x2="567" y2="1435.700"/><line x1="406" y1="1465.300" x2="567" y2="1465.300"/><line x1="406" y1="1497.300" x2="567" y2="1497.300"/>
</g>
<use href="#tMuseum" x="408.500" y="1226.700" width="34.500" height="25.300"/>
<use href="#tCar" x="408.500" y="1257.700" width="34.500" height="24"/>
<use href="#tHotel" x="408.500" y="1288" width="34.500" height="23"/>
<use href="#tFit" x="408.500" y="1317.700" width="34.500" height="23"/>
<use href="#tSchool" x="408.500" y="1347.300" width="34.500" height="23.700"/>
<use href="#tFood" x="408.500" y="1377.700" width="34.500" height="23"/>
<use href="#tSpa" x="408.500" y="1407.300" width="34.500" height="24.400"/>
<use href="#golf" x="408.500" y="1439" width="34.500" height="22.700"/>
<use href="#tCoffee" x="408.500" y="1468.700" width="34.500" height="25.300"/>
<use href="#tInbound" x="408.500" y="1500.700" width="34.500" height="27.300"/>
<g font-size="8" fill="#f9a557">
<text x="450" y="1233" textLength="41">Art Museum</text>
<text x="450" y="1265" textLength="38">Car Repairs</text>
<text x="450" y="1294.300" textLength="39.300">5 Star Hotel</text>
<text x="450" y="1324" textLength="47.300">Fitness Center</text>
<text x="450" y="1353.700" textLength="50.300">Primary School</text>
<text x="450" y="1384" textLength="41.700">French Food</text>
<text x="450" y="1414" textLength="37.300">Beauty Spa</text>
<text x="450" y="1445.300" textLength="39.300">Golf Course</text>
<text x="450" y="1474.700" textLength="41">Coffee Shop</text>
<text x="450" y="1506.700" textLength="84.700">Inbound Solutions Group</text>
</g>
<g fill="#666">
<use href="#users" x="450" y="1237" width="7.500" height="6.500"/>
<use href="#users" x="450" y="1269" width="7.500" height="6.500"/>
<use href="#users" x="450" y="1298.400" width="7.500" height="6.500"/>
<use href="#users" x="450" y="1328.400" width="7.500" height="6.500"/>
<use href="#users" x="450" y="1357.400" width="7.500" height="6.500"/>
<use href="#users" x="450" y="1388.400" width="7.500" height="6.500"/>
<use href="#users" x="450" y="1417.700" width="7.500" height="6.500"/>
<use href="#users" x="450" y="1449.400" width="7.500" height="6.500"/>
<use href="#users" x="450" y="1479.400" width="7.500" height="6.500"/>
<use href="#users" x="450" y="1511" width="7.500" height="6.500"/>
</g>
<text class="v" x="458.700" y="1242.800" textLength="48">1,781 user views</text>
<text class="v" x="458.700" y="1274.800" textLength="48">1,127 user views</text>
<text class="v" x="458.700" y="1304.200" textLength="48">1,008 user views</text>
<text class="v" x="458.700" y="1334.200" textLength="43">997 user views</text>
<text class="v" x="458.700" y="1363.200" textLength="43">993 user views</text>
<text class="v" x="458.700" y="1394.200" textLength="43">962 user views</text>
<text class="v" x="458.700" y="1423.500" textLength="43">913 user views</text>
<text class="v" x="458.700" y="1455.200" textLength="43">897 user views</text>
<text class="v" x="458.700" y="1485.200" textLength="43">623 user views</text>
<text class="v" x="458.700" y="1516.800" textLength="43">351 user views</text>

<!-- newsletter -->
<rect x="405" y="1540" width="162" height="85" fill="#fff"/>
<rect x="405" y="1540" width="162" height="4" fill="url(#air)"/>
<rect x="405" y="1621" width="162" height="4" fill="url(#airb)"/>
<rect x="405" y="1544" width="4" height="77" fill="url(#airv)"/>
<rect x="563" y="1544" width="4" height="77" fill="url(#airv)"/>
<rect x="409" y="1544" width="154" height="77" fill="url(#nl)"/>
<text x="440" y="1563.500" textLength="92" lengthAdjust="spacingAndGlyphs" font-size="11" font-weight="bold" fill="#4a4a4a">Join our Newsletter</text>
<text x="420" y="1578.500" textLength="131" font-size="7" fill="#555">Your own text here to entice users to signup.</text>
<rect x="414.500" y="1594.500" width="143.500" height="15" fill="#fff" stroke="#e2e2e2" stroke-width=".8"/>
<line x1="536" y1="1594.500" x2="536" y2="1609.500" stroke="#e8e8e8"/>
<text x="420" y="1604" textLength="67.500" font-size="7" fill="#c4c4c4">example@hotmail.com</text>
<rect x="544.500" y="1598.500" width="6" height="6" rx="1" fill="#333"/><path d="M547 1600h1v1h1v1h-1v1h-1v-1h-1v-1h1z" fill="#fff"/>

<!-- footer -->
<rect y="1635" width="620" height="125" fill="url(#foot)"/>
<rect y="1760" width="620" height="35" fill="#454545"/>
<g>
<text class="ft" x="53" y="1652.800" textLength="95" lengthAdjust="spacingAndGlyphs">EXAMPLE FOOTER WIDGET</text>
<text class="f" x="53" y="1668.500" textLength="150.300">Lorem ipsum dolor sit amet, consectetur adipiscing</text>
<text class="f" x="53" y="1681.200" textLength="135.700">elit. Praesent tempus eleifend risus ut congue.</text>
<text class="f" x="53" y="1693.800" textLength="157">Pellentesque nec lacus elit. Pellentesque convallis nisi</text>
<text class="f" x="53" y="1706.500" textLength="142.700">ac augue pharetra eu tristique neque consequat.</text>
<text class="f" x="53" y="1719.200" textLength="158.300">Mauris ornare tempor nulla, vel sagittis diam convallis</text>
<text class="f" x="53" y="1731.800" textLength="14">eget.</text>
</g>
<g transform="translate(176 0)">
<text class="ft" x="53" y="1652.800" textLength="95" lengthAdjust="spacingAndGlyphs">EXAMPLE FOOTER WIDGET</text>
<text class="f" x="53" y="1668.500" textLength="150.300">Lorem ipsum dolor sit amet, consectetur adipiscing</text>
<text class="f" x="53" y="1681.200" textLength="135.700">elit. Praesent tempus eleifend risus ut congue.</text>
<text class="f" x="53" y="1693.800" textLength="157">Pellentesque nec lacus elit. Pellentesque convallis nisi</text>
<text class="f" x="53" y="1706.500" textLength="142.700">ac augue pharetra eu tristique neque consequat.</text>
<text class="f" x="53" y="1719.200" textLength="158.300">Mauris ornare tempor nulla, vel sagittis diam convallis</text>
<text class="f" x="53" y="1731.800" textLength="14">eget.</text>
</g>
<g transform="translate(351.700 0)">
<text class="ft" x="53" y="1652.800" textLength="95" lengthAdjust="spacingAndGlyphs">EXAMPLE FOOTER WIDGET</text>
<text class="f" x="53" y="1668.500" textLength="150.300">Lorem ipsum dolor sit amet, consectetur adipiscing</text>
<text class="f" x="53" y="1681.200" textLength="135.700">elit. Praesent tempus eleifend risus ut congue.</text>
<text class="f" x="53" y="1693.800" textLength="157">Pellentesque nec lacus elit. Pellentesque convallis nisi</text>
<text class="f" x="53" y="1706.500" textLength="142.700">ac augue pharetra eu tristique neque consequat.</text>
<text class="f" x="53" y="1719.200" textLength="158.300">Mauris ornare tempor nulla, vel sagittis diam convallis</text>
<text class="f" x="53" y="1731.800" textLength="14">eget.</text>
</g>
<text x="51" y="1778.700" textLength="103" font-size="5.500" fill="#e4e4e4">© Copyright 2014 - http://dp1.wlthemes.com</text>
</svg>
</body></html>
